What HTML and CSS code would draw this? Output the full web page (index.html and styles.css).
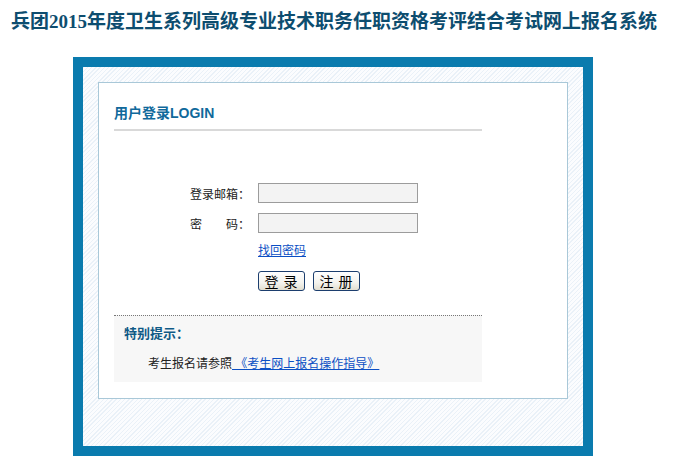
FILE: index.html
```html
<!DOCTYPE html>
<html lang="zh-CN">
<head>
<meta charset="utf-8">
<title>兵团2015年度卫生系列高级专业技术职务任职资格考评结合考试网上报名系统</title>
<link rel="stylesheet" href="styles.css">
</head>
<body>
<div class="title">兵团2015年度卫生系列高级专业技术职务任职资格考评结合考试网上报名系统</div>
<div class="frame">
  <div class="panel">
    <div class="heading">用户登录LOGIN</div>
    <div class="form">
      <div class="row">
        <label class="lbl">登录邮箱：</label>
        <input class="field" type="text">
      </div>
      <div class="row">
        <label class="lbl">密<span class="sp"></span>码：</label>
        <input class="field" type="password">
      </div>
      <div class="indent"><a class="link" href="#">找回密码</a></div>
      <div class="indent buttons">
        <button class="btn" type="button">登 录</button>
        <button class="btn" type="button">注 册</button>
      </div>
    </div>
    <div class="tips">
      <div class="tips-title">特别提示：</div>
      <div class="tips-text">考生报名请参照<a class="link guide" href="#">&nbsp;《考生网上报名操作指导》</a></div>
    </div>
  </div>
</div>
</body>
</html>
```
FILE: styles.css
```css
* { box-sizing: border-box; }
body {
  margin: 0;
  background: #fff;
  font-family: "Liberation Sans", "Noto Sans CJK SC", sans-serif;
  font-size: 12px;
  color: #222;
}
.title {
  height: 57px;
  padding: 10px 0 0 11px;
  font-family: "Liberation Serif", "Noto Sans CJK SC", serif;
  font-size: 19px;
  line-height: 24px;
  font-weight: bold;
  color: #0d4d6f;
  white-space: nowrap;
}
.frame {
  margin-left: 73px;
  width: 520px;
  height: 399px;
  border: 10px solid #0a7bae;
  padding: 15px;
  background: repeating-linear-gradient(135deg, #eaf1f8 0px, #eaf1f8 1px, #fbfcfe 1px, #fbfcfe 3px);
}
.panel {
  width: 470px;
  height: 317px;
  background: #fff;
  border: 1px solid #a9c8d8;
  padding: 0 15px;
}
.heading {
  margin-top: 20px;
  width: 368px;
  line-height: 20px;
  padding-bottom: 6px;
  border-bottom: 2px solid #d9d9d9;
  font-family: "Liberation Sans", "Noto Sans CJK SC", sans-serif;
  font-size: 14px;
  font-weight: bold;
  color: #10699b;
}
.form {
  padding-top: 52px;
  display: flex;
  flex-direction: column;
}
.row {
  display: flex;
  align-items: center;
  gap: 10px;
  height: 20px;
  margin-bottom: 10px;
}
.lbl {
  width: 136px;
  text-align: right;
  font-size: 12px;
  color: #222;
}
.sp { display: inline-block; width: 24px; }
.field {
  width: 160px;
  height: 20px;
  margin: 0;
  border: 1px solid #9c9c9c;
  background: #f3f3f3;
  padding: 0 3px;
  font-size: 12px;
}
.row .field { margin-left: -2px; }
.indent { margin-left: 144px; }
.link {
  color: #0b4fc4;
  text-decoration: underline;
  font-size: 12px;
  line-height: 16px;
}
.indent .link { display: inline-block; line-height: 16px; }
.guide { padding-right: 2px; }
.buttons {
  margin-top: 12px;
  display: flex;
  gap: 8px;
}
.btn {
  width: 47px;
  height: 20px;
  margin: 0;
  padding: 0;
  border: 1px solid #1c3e6e;
  border-radius: 3px;
  background: linear-gradient(#ffffff, #f4f3ee 60%, #e2ded0);
  font-family: "Noto Sans CJK SC", sans-serif;
  font-size: 14px;
  line-height: 18px;
  color: #000;
  letter-spacing: 1px;
}
.tips {
  margin-top: 24px;
  width: 368px;
  height: 67px;
  border-top: 1px dotted #777;
  background: #f7f7f7;
  padding: 9px 10px 0;
}
.tips-title {
  font-size: 13px;
  font-weight: bold;
  line-height: 18px;
  color: #0f5a86;
}
.tips-text {
  margin-top: 13px;
  padding-left: 24px;
  line-height: 16px;
  color: #222;
}
```
